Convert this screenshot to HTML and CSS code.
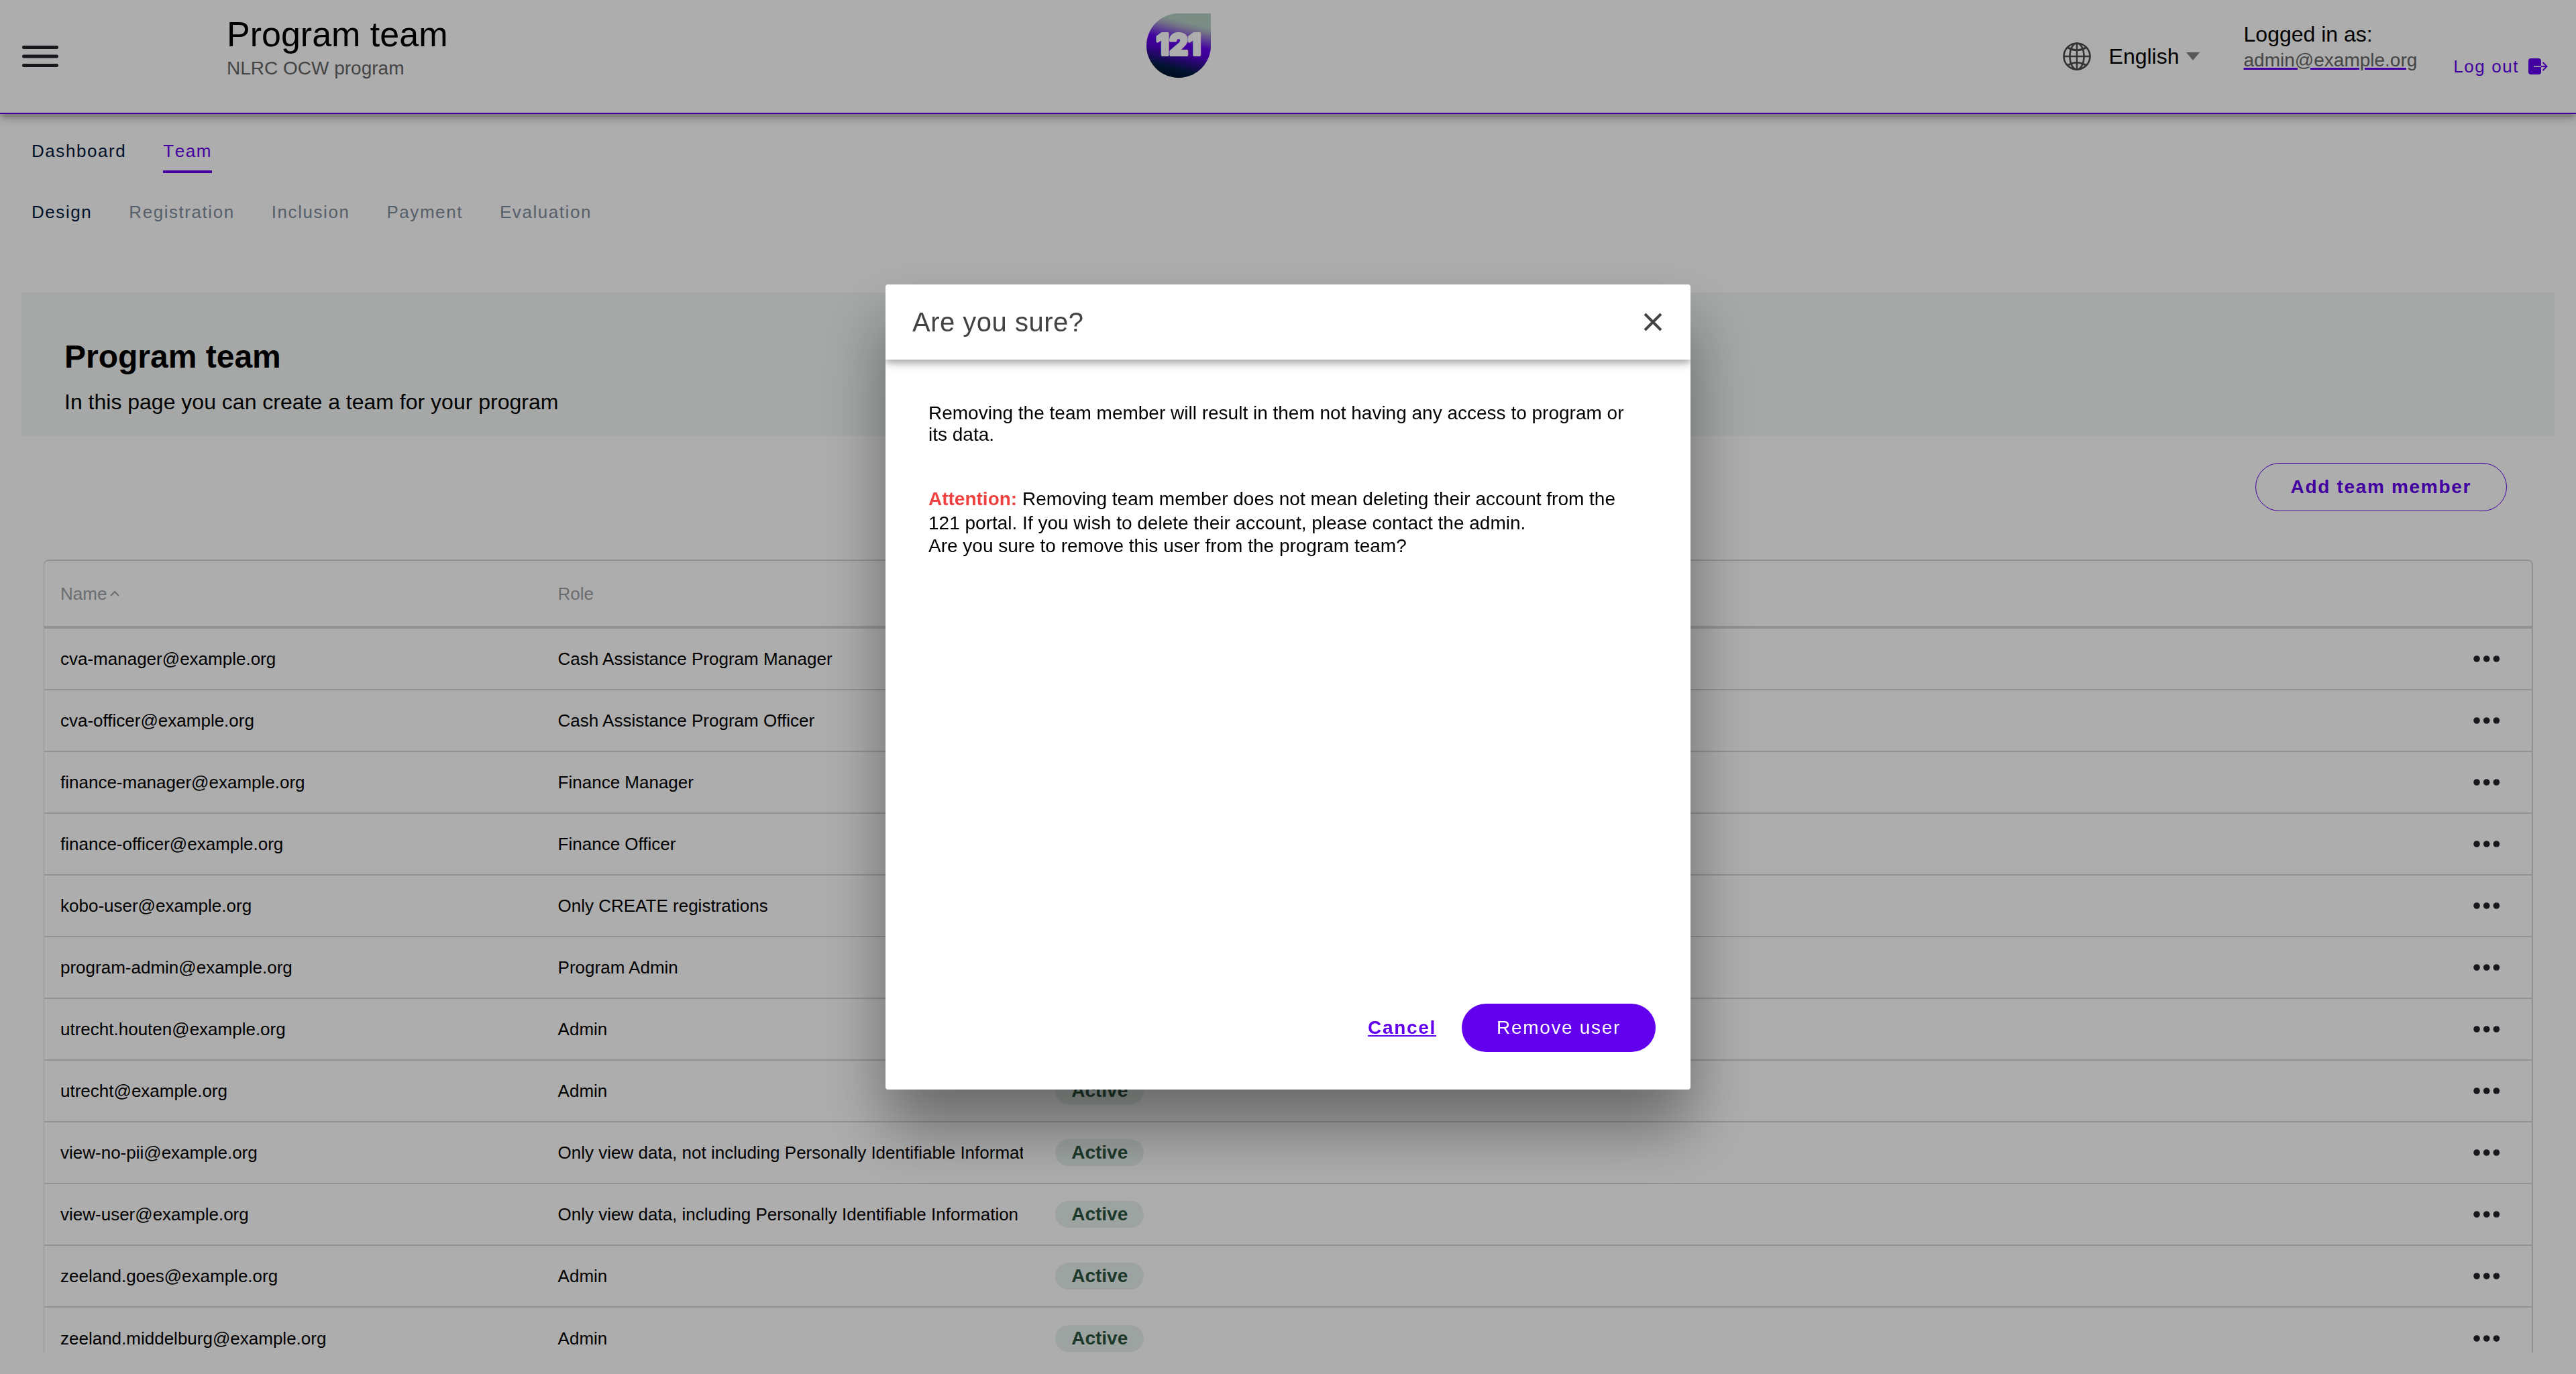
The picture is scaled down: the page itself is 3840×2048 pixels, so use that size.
FILE: index.html
```html
<!DOCTYPE html>
<html lang="en">
<head>
<meta charset="utf-8">
<title>Program team</title>
<link rel="stylesheet" href="styles.css">
</head>
<body>
<svg class="defs" aria-hidden="true">
  <symbol id="more" viewBox="0 0 40 12"><circle cx="5" cy="6" r="4.800"/><circle cx="19.700" cy="6" r="4.800"/><circle cx="34.400" cy="6" r="4.800"/></symbol>
</svg>

<header class="header">
  <div class="header-menu">
    <button class="icon-button" aria-label="Menu">
      <svg width="54" height="32" viewBox="0 0 54 32" stroke="#222428" stroke-width="5" stroke-linecap="round"><path d="M2.500 2.500H51.500M2.500 16H51.500M2.500 29.500H51.500"/></svg>
    </button>
  </div>
  <div class="header-title">
    <h1 class="title">Program team</h1>
    <p class="subtitle">NLRC OCW program</p>
  </div>
  <div class="header-end">
    <svg class="logo" width="96" height="96" viewBox="0 0 96 96" role="img" aria-label="121">
      <defs>
        <linearGradient id="drop" x1="62" y1="0" x2="38" y2="96" gradientUnits="userSpaceOnUse">
          <stop offset="0.130" stop-color="#b4cfc3"/>
          <stop offset="0.220" stop-color="#a9a9c8"/>
          <stop offset="0.460" stop-color="#6200ee"/>
          <stop offset="0.600" stop-color="#5800d4"/>
          <stop offset="0.860" stop-color="#001d46"/>
          <stop offset="1" stop-color="#00132e"/>
        </linearGradient>
      </defs>
      <path d="M48 0H96V48A48 48 0 1 1 48 0Z" fill="url(#drop)"/>
      <text class="logo-text" x="48" y="62" text-anchor="middle">121</text>
    </svg>
    <div class="header-tools">
      <div class="language">
        <svg width="42" height="42" viewBox="0 0 42 42" fill="none" stroke="#4d4d4d" stroke-width="2.600"><circle cx="21" cy="21" r="19.500"/><ellipse cx="21" cy="21" rx="10.500" ry="19.500"/><path d="M21 1V41M1 21H41M7.500 8Q21 15.500 34.500 8M7.500 34Q21 26.500 34.500 34"/></svg>
        <span class="select-wrap">
          <select class="select" aria-label="Language"><option>English</option></select>
          <svg width="20" height="12" viewBox="0 0 20 12" fill="#808080"><path d="M0 0H20L10 12Z"/></svg>
        </span>
      </div>
      <div class="account">
        <span class="account-label">Logged in as:</span>
        <a class="account-link" href="#">admin@example.org</a>
      </div>
      <button class="logout">Log out
        <svg width="30" height="26" viewBox="0 0 30 26"><rect x="1" y="1" width="19" height="24" rx="4" fill="#6200ee"/><path d="M9 13H20" stroke="#fff" stroke-width="1.600"/><path d="M20 13H28.500M22.500 7L28.500 13L22.500 19" fill="none" stroke="#6200ee" stroke-width="2"/></svg>
      </button>
    </div>
  </div>
</header>

<main class="main">
  <nav class="tabs">
    <a class="tab" href="#">Dashboard</a>
    <a class="tab tab-active" href="#" aria-current="page">Team</a>
  </nav>
  <nav class="phases">
    <button class="phase">Design</button>
    <button class="phase" disabled>Registration</button>
    <button class="phase" disabled>Inclusion</button>
    <button class="phase" disabled>Payment</button>
    <button class="phase" disabled>Evaluation</button>
  </nav>

  <section class="banner">
    <h2 class="banner-title">Program team</h2>
    <p class="banner-text">In this page you can create a team for your program</p>
  </section>

  <div class="actions">
    <button class="button button-outline">Add team member</button>
  </div>

  <div class="table-wrap">
    <table class="table">
      <thead>
        <tr><th>Name<svg class="sort" width="14" height="9" viewBox="0 0 14 9" fill="none" stroke="#9d9fa6" stroke-width="2"><path d="M1 8L7 2L13 8"/></svg></th><th>Role</th><th>Status</th><th></th><th></th></tr>
      </thead>
      <tbody>
        <tr><td>cva-manager@example.org</td><td>Cash Assistance Program Manager</td><td><span class="badge">Active</span></td><td></td><td class="more"><button class="icon-button" aria-label="More"><svg width="40" height="12"><use href="#more"/></svg></button></td></tr>
        <tr><td>cva-officer@example.org</td><td>Cash Assistance Program Officer</td><td><span class="badge">Active</span></td><td></td><td class="more"><button class="icon-button" aria-label="More"><svg width="40" height="12"><use href="#more"/></svg></button></td></tr>
        <tr><td>finance-manager@example.org</td><td>Finance Manager</td><td><span class="badge">Active</span></td><td></td><td class="more"><button class="icon-button" aria-label="More"><svg width="40" height="12"><use href="#more"/></svg></button></td></tr>
        <tr><td>finance-officer@example.org</td><td>Finance Officer</td><td><span class="badge">Active</span></td><td></td><td class="more"><button class="icon-button" aria-label="More"><svg width="40" height="12"><use href="#more"/></svg></button></td></tr>
        <tr><td>kobo-user@example.org</td><td>Only CREATE registrations</td><td><span class="badge">Active</span></td><td></td><td class="more"><button class="icon-button" aria-label="More"><svg width="40" height="12"><use href="#more"/></svg></button></td></tr>
        <tr><td>program-admin@example.org</td><td>Program Admin</td><td><span class="badge">Active</span></td><td></td><td class="more"><button class="icon-button" aria-label="More"><svg width="40" height="12"><use href="#more"/></svg></button></td></tr>
        <tr><td>utrecht.houten@example.org</td><td>Admin</td><td><span class="badge">Active</span></td><td></td><td class="more"><button class="icon-button" aria-label="More"><svg width="40" height="12"><use href="#more"/></svg></button></td></tr>
        <tr><td>utrecht@example.org</td><td>Admin</td><td><span class="badge">Active</span></td><td></td><td class="more"><button class="icon-button" aria-label="More"><svg width="40" height="12"><use href="#more"/></svg></button></td></tr>
        <tr><td>view-no-pii@example.org</td><td><div class="clip">Only view data, not including Personally Identifiable Information</div></td><td><span class="badge">Active</span></td><td></td><td class="more"><button class="icon-button" aria-label="More"><svg width="40" height="12"><use href="#more"/></svg></button></td></tr>
        <tr><td>view-user@example.org</td><td><div class="clip">Only view data, including Personally Identifiable Information</div></td><td><span class="badge">Active</span></td><td></td><td class="more"><button class="icon-button" aria-label="More"><svg width="40" height="12"><use href="#more"/></svg></button></td></tr>
        <tr><td>zeeland.goes@example.org</td><td>Admin</td><td><span class="badge">Active</span></td><td></td><td class="more"><button class="icon-button" aria-label="More"><svg width="40" height="12"><use href="#more"/></svg></button></td></tr>
        <tr><td>zeeland.middelburg@example.org</td><td>Admin</td><td><span class="badge">Active</span></td><td></td><td class="more"><button class="icon-button" aria-label="More"><svg width="40" height="12"><use href="#more"/></svg></button></td></tr>
      </tbody>
    </table>
  </div>
</main>

<div class="backdrop">
  <section class="dialog" role="dialog" aria-modal="true" aria-labelledby="dialog-title">
    <div class="dialog-header">
      <h2 class="dialog-title" id="dialog-title">Are you sure?</h2>
      <button class="icon-button" aria-label="Close">
        <svg width="28" height="28" viewBox="0 0 28 28" stroke="#424242" stroke-width="4"><path d="M2 2L26 26M26 2L2 26"/></svg>
      </button>
    </div>
    <div class="dialog-body">
      <p class="dialog-lead">Removing the team member will result in them not having any access to program or its data.</p>
      <p class="dialog-note"><strong class="attention">Attention:</strong> Removing team member does not mean deleting their account from the 121 portal. If you wish to delete their account, please contact the admin.</p>
      <p class="dialog-question">Are you sure to remove this user from the program team?</p>
    </div>
    <div class="dialog-footer">
      <button class="button-link">Cancel</button>
      <button class="button button-solid">Remove user</button>
    </div>
  </section>
</div>
</body>
</html>
```
FILE: styles.css
```css
:root {
  --primary: #6200ee;
  --navy: #00193c;
  --line: #d5d7da;
  --elevation: 0 4px 8px -2px rgba(0, 0, 0, 0.2), 0 8px 10px 0 rgba(0, 0, 0, 0.14), 0 2px 20px 0 rgba(0, 0, 0, 0.12);
}

* {
  box-sizing: border-box;
}

body {
  margin: 0;
  height: 100vh;
  display: flex;
  flex-direction: column;
  overflow: hidden;
  padding-bottom: 32px;
  background: #fff;
  color: #000;
  font-family: "Liberation Sans", Arial, sans-serif;
  font-size: 28px;
  line-height: 32px;
}

h1, h2, p {
  margin: 0;
}

svg {
  display: block;
}

button, select {
  font: inherit;
  color: inherit;
  margin: 0;
  padding: 0;
  border: 0;
  background: none;
}

.defs {
  position: absolute;
  width: 0;
  height: 0;
}

/* Header */
.header {
  position: relative;
  flex: none;
  display: grid;
  grid-template-columns: 338px 1371fr 2131fr;
  height: 170px;
  border-bottom: 2px solid var(--primary);
  background: #fff;
  box-shadow: var(--elevation);
}

.header-menu {
  display: flex;
  align-items: center;
  padding-left: 33px;
}

.header-title {
  padding-top: 18px;
}

.title {
  font-size: 52px;
  font-weight: 400;
  line-height: 66px;
}

.subtitle {
  margin-top: 2px;
  color: #666;
}

.header-end {
  display: flex;
  justify-content: space-between;
  padding-right: 42px;
}

.logo {
  margin-top: 20px;
}

.logo-text {
  font-family: Inter, sans-serif;
  font-size: 44px;
  font-weight: 800;
  fill: #fff;
  stroke: #fff;
  stroke-width: 4px;
  stroke-linejoin: round;
}

.header-tools {
  display: flex;
  align-items: center;
}

.language {
  display: flex;
  align-items: center;
  gap: 27px;
  margin-right: 66px;
}

.select-wrap {
  display: flex;
  align-items: center;
  gap: 10px;
}

.select {
  appearance: none;
  font-size: 32px;
  line-height: 36px;
}

.account {
  display: flex;
  flex-direction: column;
  margin-right: 54px;
  padding-bottom: 24px;
}

.account-label {
  font-size: 32px;
  line-height: 36px;
}

.account-link {
  color: #666;
  line-height: 42px;
  text-decoration: underline 3px var(--primary);
}

.logout {
  display: flex;
  align-items: center;
  gap: 13px;
  padding-top: 30px;
  color: var(--primary);
  font-size: 26px;
  letter-spacing: 0.06em;
}

/* Navigation */
.main {
  flex: 1;
  min-height: 0;
  overflow: hidden;
  padding: 40px 32px 0;
}

.tabs, .phases {
  display: flex;
  gap: 55px;
  padding-left: 15px;
  font-size: 26px;
  font-kerning: none;
  line-height: 30px;
  letter-spacing: 0.06em;
  color: var(--navy);
}

.tab {
  padding-bottom: 14px;
  border-bottom: 4px solid transparent;
  color: inherit;
  text-decoration: none;
}

.tab-active {
  color: var(--primary);
  border-color: var(--primary);
}

.phases {
  margin-top: 43px;
}

.phase {
  letter-spacing: inherit;
}

.phase:disabled {
  color: #808c9d;
}

/* Banner */
.banner {
  margin-top: 105px;
  padding: 68px 64px 33px;
  background: #f4f8f6;
}

.banner-title {
  font-size: 48px;
  line-height: 56px;
}

.banner-text {
  margin-top: 21px;
  font-size: 32px;
  line-height: 36px;
}

.actions {
  display: flex;
  justify-content: flex-end;
  padding: 40px 71px 72px;
}

.button {
  height: 72px;
  padding: 0 52px;
  border: 1px solid var(--primary);
  border-radius: 36px;
  letter-spacing: 0.06em;
}

.button-outline {
  color: var(--primary);
  font-weight: 700;
}

.button-solid {
  border: 0;
  background: var(--primary);
  color: #fff;
}

.button-link {
  color: var(--primary);
  font-weight: 700;
  letter-spacing: 0.06em;
  text-decoration: underline;
}

.icon-button {
  display: block;
}

/* Table */
.table-wrap {
  margin: 0 32px 0 33px;
  border: 2px solid var(--line);
  border-left-width: 1px;
  border-radius: 8px;
}

.table {
  width: 100%;
  table-layout: fixed;
  border-collapse: separate;
  border-spacing: 0;
  font-size: 26px;
  line-height: 30px;
}

.table th, .table td {
  padding: 0 24px;
  text-align: left;
  white-space: nowrap;
}

.table th {
  height: 101px;
  border-bottom: 4px solid var(--line);
  color: #9d9fa6;
  font-weight: 400;
}

.sort {
  display: inline-block;
  margin-left: 5px;
  vertical-align: 5px;
}

.table td {
  height: 92px;
  border-bottom: 2px solid var(--line);
}

.table tr:last-child td {
  border-bottom: 0;
}

.table .more {
  padding-right: 47px;
}

.more .icon-button {
  margin-left: auto;
  color: #222428;
}

.more svg {
  fill: currentColor;
}

.clip {
  overflow: hidden;
}

.badge {
  display: inline-block;
  padding: 0 24px;
  border-radius: 20px;
  background: #e8f1ec;
  color: #2c5540;
  font-size: 28px;
  font-weight: 700;
  line-height: 40px;
  vertical-align: middle;
}

/* Dialog */
.backdrop {
  position: fixed;
  inset: 0;
  display: flex;
  align-items: center;
  justify-content: center;
  background: rgba(0, 0, 0, 0.32);
}

.dialog {
  display: flex;
  flex-direction: column;
  width: 1200px;
  aspect-ratio: 1;
  border-radius: 4px;
  background: #fff;
  box-shadow: 0 56px 96px rgba(0, 0, 0, 0.4);
}

.dialog-header {
  display: flex;
  align-items: center;
  justify-content: space-between;
  height: 112px;
  padding: 0 42px 0 40px;
  box-shadow: var(--elevation);
  clip-path: inset(0 0 -40px 0);
}

.dialog-title {
  color: #424242;
  font-size: 40px;
  font-weight: 400;
  line-height: 48px;
  letter-spacing: 0.0125em;
}

.dialog-body {
  flex: 1;
  padding: 64px;
}

.dialog-note {
  margin-top: 62px;
  line-height: 36px;
}

.attention {
  color: #f04141;
}

.dialog-footer {
  display: flex;
  align-items: center;
  justify-content: flex-end;
  gap: 38px;
  padding: 0 52px 56px;
}
```
